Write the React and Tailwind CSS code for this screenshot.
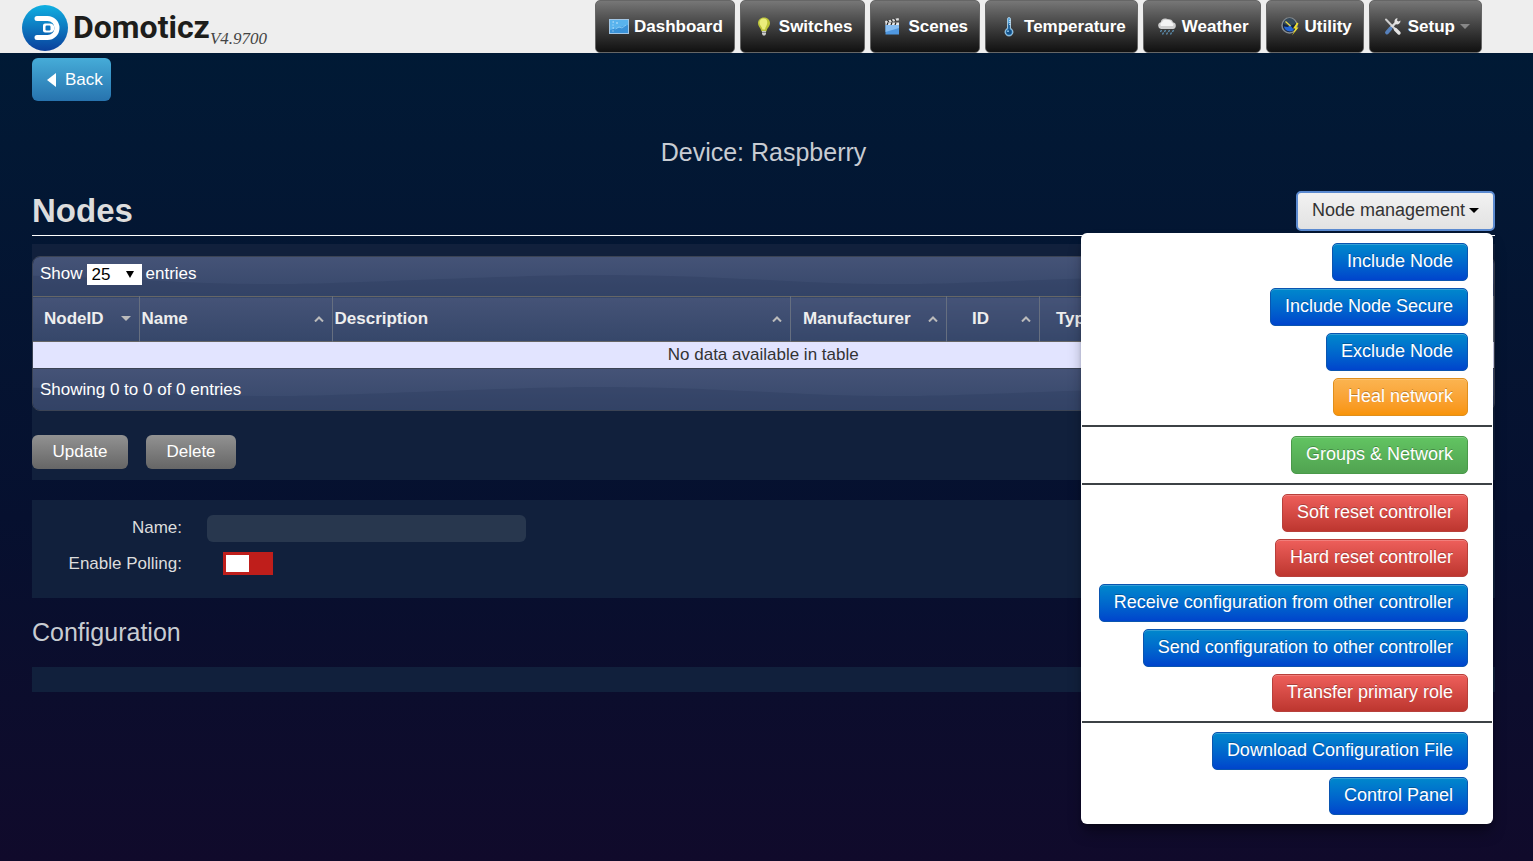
import { useState } from "react";

const GLOSS = "bg-linear-to-b from-[#455377] to-[#36476a]";

const DashboardIcon = () => (
    <svg viewBox="0 0 20 20" className="h-5 w-5">
        <rect x="0.5" y="2.500" width="19" height="14" fill="#3a92d8" stroke="#a3c6e4" />
        <path d="M1 3h18v5L1 13z" fill="#62bbf2" opacity="0.8" />
        <path d="M3.500 5h1.500M3.500 8h1M3.500 11h1.500M3.500 14h1M7 6h2" stroke="#c6e6fb" strokeWidth="1" fill="none" />
        <path d="M6.500 12l3.500-2 3 1 4-3" stroke="#8fd0f8" strokeWidth="0.800" fill="none" />
    </svg>
);

const BulbIcon = () => (
    <svg viewBox="0 0 20 20" className="h-5 w-5">
        <path d="M10 0.500c3.600 0 6 2.500 6 5.500 0 3.500-2.800 4.800-3.600 8.500H7.600C6.800 10.800 4 9.500 4 6c0-3 2.400-5.500 6-5.500z" fill="#bcc43a" />
        <path d="M9.500 1.500c2.500 0 3.800 1.500 3.800 4 0 2.800-1.800 4-2.300 7H8.500C8 9.500 5.500 8.500 5.500 5.500c0-2.300 1.500-4 4-4z" fill="#eaed7c" />
        <path d="M8 14h4v3l-1 1.500H9L8 17z" fill="#c9c9c9" />
        <path d="M8 15.500h4" stroke="#777" strokeWidth="0.8" />
    </svg>
);

const ScenesIcon = () => (
    <svg viewBox="0 0 20 20" className="h-5 w-5">
        <path d="M1 4L14.500 1l.6 2.300L1.600 6.300z" fill="#ddd" />
        <path d="M3.500 3l1.500 2.500M7 2.200l1.500 2.500M10.500 1.500L12 4" stroke="#222" strokeWidth="1.200" />
        <path d="M1.500 5.500h13.500v2.500h-13.500z" fill="#e8e8e8" />
        <path d="M4 5.500L3 8M8 5.500L7 8M12 5.500L11 8" stroke="#222" strokeWidth="1.200" />
        <rect x="1.500" y="8" width="13.500" height="9.500" fill="#4f97e0" />
        <path d="M1.500 8h13.500v3l-13.500 4z" fill="#86bdf2" />
    </svg>
);

const ThermometerIcon = () => (
    <svg viewBox="0 0 20 20" className="h-5 w-5">
        <path d="M8.500 2a1.500 1.500 0 013 0v9.300a4 4 0 11-3 0z" fill="#5aa7dd" stroke="#b5d8ef" strokeWidth="0.8" />
        <circle cx="10" cy="15" r="2.800" fill="#134f86" />
        <path d="M10 6.500v8" stroke="#134f86" strokeWidth="1.400" />
        <path d="M11.500 3.500h-1.500M11.500 5.500h-1.500M11.500 7.500h-1.500" stroke="#e6f4fd" strokeWidth="0.700" />
        <circle cx="9" cy="14.200" r="0.900" fill="#9fd3f5" />
    </svg>
);

const WeatherIcon = () => (
    <svg viewBox="0 0 20 20" className="h-5 w-5">
        <path d="M4 12a3.500 3.500 0 01-.3-6.800A4.500 4.500 0 018 1.500a4 4 0 013 .8 4 4 0 015 3A3.400 3.400 0 0116 12z" fill="#cfcfcf" />
        <path d="M4 9a2.500 2.500 0 011-4 4 4 0 015-2 4 4 0 015 3 2 2 0 011 3z" fill="#f4f4f4" />
        <path d="M4.500 13l-1 2M8.500 13l-1 2M12.500 13l-1 2M16.500 13l-1 2M6.500 15.500l-1 2M10.500 15.500l-1 2M14.500 15.500l-1 2" stroke="#5f95b8" strokeWidth="1.300" />
    </svg>
);

const UtilityIcon = () => (
    <svg viewBox="0 0 20 20" className="h-5 w-5">
        <circle cx="9.500" cy="8.500" r="7.500" fill="#15243d" stroke="#858b90" strokeWidth="1.500" />
        <path d="M3.500 7a6 6 0 0112 0l-6 2z" fill="#34495a" />
        <path d="M4 9.500a6 5.500 0 0010 3.500l-4-5-2 2z" fill="#2467d6" />
        <path d="M5.500 4.500l5 4.500" stroke="#e8d94a" strokeWidth="1.300" />
        <path d="M17 5.500l-4 6h2.500l-3.500 7 6.500-8h-2.500l2.500-4z" fill="#f0e02a" />
    </svg>
);

const SetupIcon = () => (
    <svg viewBox="0 0 20 20" className="h-5 w-5">
        <path d="M3 2.500l10 10.500" stroke="#cfcfcf" strokeWidth="2" strokeLinecap="round" />
        <path d="M12.500 12.500l3.500 3.500" stroke="#e3e3e3" strokeWidth="3.400" strokeLinecap="round" />
        <path d="M13.500 5L7 11.500" stroke="#dcdcdc" strokeWidth="2.400" />
        <path d="M17.500 3.500a3.500 3.500 0 01-5 3.500 3.500 3.500 0 012-6l-.5 2.500 1.500 1z" fill="#e4e4e4" />
        <path d="M7.500 11.500L4 15.500" stroke="#5680bb" strokeWidth="3.800" strokeLinecap="round" />
    </svg>
);

const navItems = [
    { label: "Dashboard", Icon: DashboardIcon },
    { label: "Switches", Icon: BulbIcon },
    { label: "Scenes", Icon: ScenesIcon },
    { label: "Temperature", Icon: ThermometerIcon },
    { label: "Weather", Icon: WeatherIcon },
    { label: "Utility", Icon: UtilityIcon },
    { label: "Setup", Icon: SetupIcon, caret: true },
];

const columns = [
    { label: "NodeID", cell: "w-[106px] pl-[11px]", sorted: true },
    { label: "Name", cell: "w-[193px] pl-[2px]" },
    { label: "Description", cell: "pl-[2px]" },
    { label: "Manufacturer", cell: "w-[156px] pl-3" },
    { label: "ID", cell: "w-[93px] pl-[25px]" },
    { label: "Type", cell: "w-[454px] pl-4" },
];

const tones = {
    blue: "border-[#0a55b0] from-[#0088cc] to-[#0044cc]",
    orange: "border-[#e08f1c] from-[#fbb450] to-[#f89406]",
    green: "border-[#4a9a4a] from-[#62c462] to-[#51a351]",
    red: "border-[#b8403b] from-[#ee5f5b] to-[#bd362f]",
};

const menuGroups = [
    [
        { label: "Include Node", tone: "blue" },
        { label: "Include Node Secure", tone: "blue" },
        { label: "Exclude Node", tone: "blue" },
        { label: "Heal network", tone: "orange" },
    ],
    [{ label: "Groups & Network", tone: "green" }],
    [
        { label: "Soft reset controller", tone: "red" },
        { label: "Hard reset controller", tone: "red" },
        { label: "Receive configuration from other controller", tone: "blue" },
        { label: "Send configuration to other controller", tone: "blue" },
        { label: "Transfer primary role", tone: "red" },
    ],
    [
        { label: "Download Configuration File", tone: "blue" },
        { label: "Control Panel", tone: "blue" },
    ],
];

// Shallow glossy wave drawn behind the table bars
const Wave = ({ id }) => (
    <svg className="absolute inset-0 h-full w-full" aria-hidden="true">
        <defs>
            <pattern id={id} width="625" height="46" patternUnits="userSpaceOnUse" patternTransform="translate(90)">
                <path d="M0 22C60 25 100 27 156 27S390 18 468 18S580 20 625 22V46H0z" fill="#2c3d5e" opacity="0.4" />
            </pattern>
        </defs>
        <rect width="100%" height="100%" fill={`url(#${id})`} />
    </svg>
);

const Header = () => (
    <header className="flex h-[53px] justify-between bg-[#eeeeee] pl-[22px] pr-[51px]">
        <a href="#home" className="flex items-center">
            <svg viewBox="0 0 46 46" className="mt-[3px] h-[46px] w-[46px]">
                <defs>
                    <linearGradient id="logo" x1="0" y1="0" x2="0" y2="1">
                        <stop offset="0" stopColor="#0fb0e2" />
                        <stop offset="1" stopColor="#0a3f9c" />
                    </linearGradient>
                </defs>
                <circle cx="23" cy="23" r="23" fill="url(#logo)" />
                <path d="M15 13.500h10.500a9.500 9.500 0 010 19H15" fill="none" stroke="#fff" strokeWidth="5" strokeLinecap="round" />
                <path d="M23 18.500h5a4.500 4.500 0 010 9h-5a2 2 0 01-2-2v-5a2 2 0 012-2z" fill="#fff" />
                <rect x="23.500" y="20.500" width="5" height="5" rx="1.200" fill="#0b74bf" />
            </svg>
            <span className="ml-[5px] font-[Roboto,sans-serif] text-[32px] leading-none font-bold text-[#1d1d1b]">Domoticz</span>
            <span className="mt-6 font-['Liberation_Serif',serif] text-[17px] text-[#444444] italic">V4.9700</span>
        </a>
        <nav className="flex gap-[5px]">
            {navItems.map(({ label, Icon, caret }) => (
                <a key={label} href={`#${label}`} className="flex items-center gap-[5px] rounded-[5px] border border-[#666666] bg-linear-to-b from-[#777777] to-[#111111] pr-[11px] pl-[13px] font-bold text-white">
                    <Icon />
                    {label}
                    {caret && <span className="border-x-5 border-t-5 border-x-transparent border-t-[#888888]" />}
                </a>
            ))}
        </nav>
    </header>
);

const NodeMenu = () => (
    <div className="absolute top-[42px] right-[2px] z-10 w-[412px] rounded-md bg-white px-px pt-[10px] pb-[9px] shadow-lg shadow-black/40">
        {menuGroups.map((group, i) => (
            <div key={i}>
                {i > 0 && <hr className="my-[9px] border-t-2 border-[#3c4145]" />}
                <ul className="flex flex-col items-end gap-[7px] pr-6">
                    {group.map(({ label, tone }) => (
                        <li key={label}>
                            <button type="button" className={`block h-[38px] rounded-[5px] border bg-linear-to-b px-[14px] pb-[2px] text-[18px] whitespace-nowrap text-white shadow-[inset_0_1px_0_rgba(255,255,255,0.2)] text-shadow-[0_-1px_0_rgba(0,0,0,0.25)] ${tones[tone]}`}>
                                {label}
                            </button>
                        </li>
                    ))}
                </ul>
            </div>
        ))}
    </div>
);

const NodesTable = () => (
    <div className="overflow-hidden rounded-lg border border-[#3b4354] text-white">
        <div className={`relative h-[39px] ${GLOSS}`}>
            <Wave id="wave-top" />
            <label className="relative flex items-center gap-1 px-[7px] pt-[5px]">
                Show
                <span className="relative flex items-center">
                    <select defaultValue="25" className="h-[21px] w-[55px] appearance-none bg-white pl-[5px] leading-none text-black">
                        <option>10</option>
                        <option>25</option>
                        <option>50</option>
                    </select>
                    <span className="pointer-events-none absolute right-2 border-x-4 border-t-7 border-x-transparent border-t-black" />
                </span>
                entries
            </label>
        </div>
        <table className="w-full table-fixed border-collapse">
            <thead>
                <tr className={`h-[45px] border-y border-[#666666] ${GLOSS}`}>
                    {columns.map(({ label, cell, sorted }) => (
                        <th key={label} className={`border-r border-[#666f80] pb-px text-left font-bold text-[#eeeeee] ${cell}`}>
                            <span className="flex items-center justify-between pr-2">
                                {label}
                                {sorted ? (
                                    <span className="border-x-5 border-t-5 border-x-transparent border-t-[#bbbbbb]" />
                                ) : (
                                    <svg viewBox="0 0 10 6" className="h-[6px] w-[10px]">
                                        <path d="M1 5.500l4-4 4 4" fill="none" stroke="#bbb" strokeWidth="2" />
                                    </svg>
                                )}
                            </span>
                        </th>
                    ))}
                </tr>
            </thead>
            <tbody>
                <tr className="h-[26px] bg-[#e2e4ff]">
                    <td colSpan={columns.length} className="text-center leading-none text-[#333333]">No data available in table</td>
                </tr>
            </tbody>
        </table>
        <div className={`relative h-[42px] border-t border-[#3b4354] ${GLOSS}`}>
            <Wave id="wave-bottom" />
            <p className="relative px-[7px] leading-[42px]">Showing 0 to 0 of 0 entries</p>
        </div>
    </div>
);

const App = () => {
    const [menuOpen, setMenuOpen] = useState(true);
    const [polling, setPolling] = useState(false);

    return (
        <div className="min-h-screen bg-linear-to-b from-[#001b36] via-[#06102f] via-60% to-[#100a2b] font-['Liberation_Sans',Arial,sans-serif] text-[17px] leading-6">
            <Header />
            <main className="pt-[5px] pr-[38px] pl-8">
                <button type="button" className="flex h-[43px] items-center gap-[9px] rounded-md bg-linear-to-b from-[#46acd8] to-[#2773ae] pr-2 pl-[15px] text-white">
                    <span className="border-y-7 border-r-9 border-y-transparent border-r-white" />
                    Back
                </button>
                <h2 className="mt-[35px] text-center text-[25px] leading-8 text-[#c8ccd2]">Device: Raspberry</h2>

                <div className="relative mt-[23px] flex h-[45px] items-start justify-between border-b border-white">
                    <h1 className="text-[33px] leading-10 font-bold text-[#dddddd]">Nodes</h1>
                    <button type="button" onClick={() => setMenuOpen(!menuOpen)} className="flex h-10 items-center gap-1 rounded-[5px] border-2 border-[#5b8ad0] bg-linear-to-b from-[#f2f2f2] to-[#e2e2e2] px-[14px] pb-[2px] text-[18px] text-[#333333]">
                        Node management
                        <span className="border-x-5 border-t-5 border-x-transparent border-t-black" />
                    </button>
                    {menuOpen && <NodeMenu />}
                </div>

                <section className="mt-2 bg-[#11203c] pt-3 pb-[11px]">
                    <NodesTable />
                    <div className="mt-6 flex gap-[18px]">
                        <button type="button" className="h-[34px] w-24 rounded-md bg-linear-to-b from-[#929292] to-[#666666] text-white">Update</button>
                        <button type="button" className="h-[34px] w-[90px] rounded-md bg-linear-to-b from-[#929292] to-[#666666] text-white">Delete</button>
                    </div>
                </section>

                <section className="mt-5 grid grid-cols-[150px_1fr] items-center gap-x-[25px] gap-y-[10px] bg-[#11203c] pt-[15px] pb-[22px] text-[#dddddd]">
                    <label htmlFor="name" className="text-right">Name:</label>
                    <input id="name" type="text" className="h-[27px] w-[319px] rounded-md bg-[#28374e] px-2" />
                    <label htmlFor="polling" className="text-right">Enable Polling:</label>
                    <span className="ml-4 flex">
                        <input id="polling" type="checkbox" checked={polling} onChange={() => setPolling(!polling)} className="h-[23px] w-[50px] appearance-none border-3 border-[#bf1e1b] bg-[#bf1e1b] before:block before:h-[17px] before:w-[23px] before:bg-white checked:border-[#2b8a2b] checked:bg-[#2b8a2b] checked:before:ml-auto" />
                    </span>
                </section>

                <h2 className="mt-[18px] text-[25px] leading-8 text-[#c8ccd2]">Configuration</h2>
                <section className="mt-[19px] h-[25px] bg-[#11203c]" />
            </main>
        </div>
    );
};

export default App;
